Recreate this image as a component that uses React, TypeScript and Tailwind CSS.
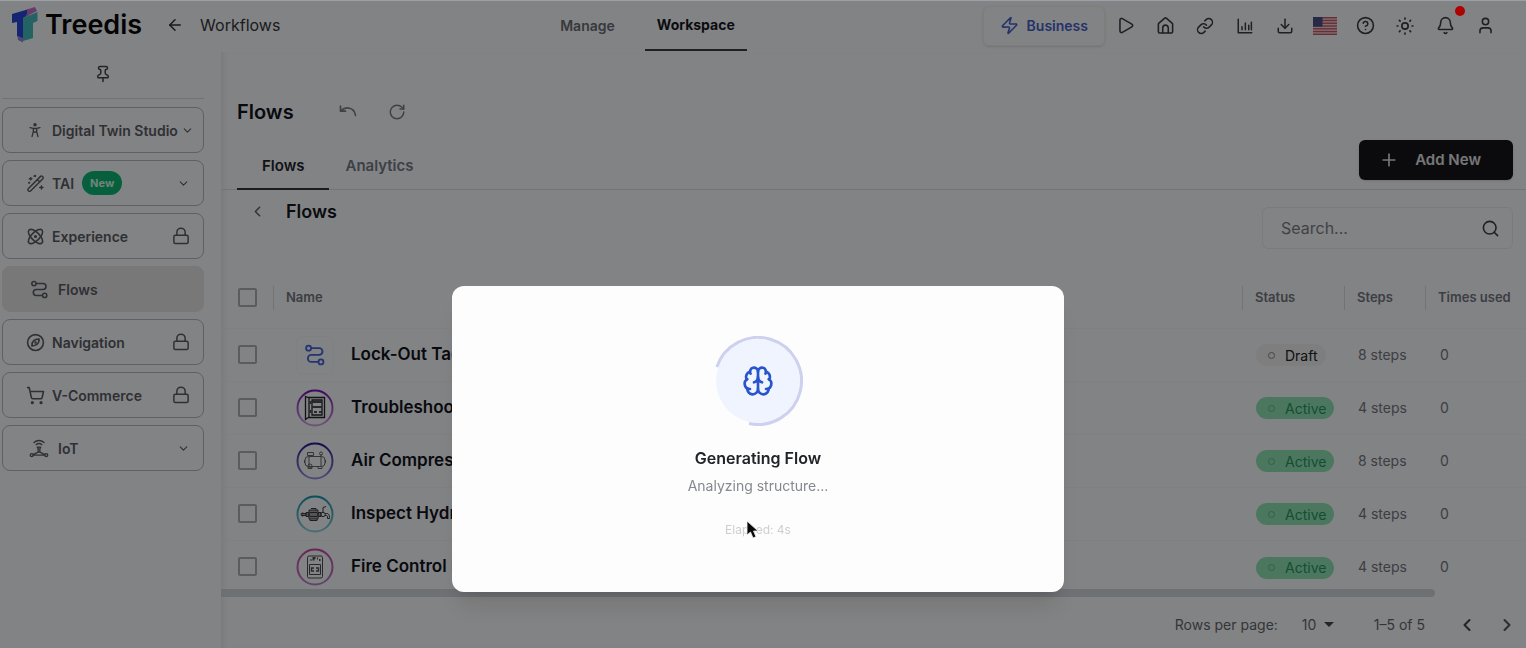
import { useState } from "react";
import type { ReactNode } from "react";
import {
  ArrowLeft,
  Atom,
  Bell,
  Brain,
  ChevronDown,
  ChevronLeft,
  ChevronRight,
  CircleHelp,
  Download,
  Link as LinkIcon,
  Pin,
  Play,
  Plus,
  RotateCw,
  Search,
  ShoppingCart,
  User,
  Zap,
} from "lucide-react";
import clsx from "clsx";

interface GlyphProps {
  size?: number;
  className?: string;
  strokeWidth?: number;
  children?: ReactNode;
}

function Glyph({ size = 20, className, strokeWidth = 2, children }: GlyphProps) {
  return (
    <svg width={size} height={size} viewBox="0 0 24 24" fill="none" stroke="currentColor" strokeWidth={strokeWidth} strokeLinecap="round" strokeLinejoin="round" className={className} aria-hidden="true">
      {children}
    </svg>
  );
}

function FlowIcon({ size = 20, className }: GlyphProps) {
  return (
    <Glyph size={size} className={className}>
      <circle cx="5" cy="4.5" r="2.7" />
      <circle cx="18.5" cy="19.5" r="2.7" />
      <path d="M8 4.500h8.500a3.700 3.700 0 0 1 0 7.400H8a3.800 3.800 0 0 0 0 7.600h7.500" />
    </Glyph>
  );
}

function HomeIcon() {
  return (
    <Glyph size={19}>
      <path d="M3 10.500a2 2 0 0 1 .7-1.500l7-6a2 2 0 0 1 2.600 0l7 6a2 2 0 0 1 .7 1.500V20a1.500 1.500 0 0 1-1.500 1.500h-15A1.500 1.500 0 0 1 3 20z" />
      <path d="M8.500 21v-6a3.500 3.500 0 0 1 7 0v6" />
    </Glyph>
  );
}

function ChartIcon() {
  return (
    <Glyph size={18}>
      <path d="M3 3v18h18" />
      <path d="M8 17v-4M12.500 17V8M17 17v-6M20.500 17V7" />
    </Glyph>
  );
}

function SunIcon() {
  return (
    <Glyph>
      <circle cx="12" cy="12" r="3.800" />
      <path d="M12 2.500v1M12 20.500v1M2.500 12h1M20.500 12h1M5.300 5.300l.8.8M17.900 17.900l.8.8M18.700 5.300l-.8.8M6.100 17.900l-.8.8" />
    </Glyph>
  );
}

function PersonIcon() {
  return (
    <Glyph size={16} strokeWidth={2}>
      <circle cx="12" cy="4" r="1.600" fill="currentColor" />
      <path d="M4.500 8.500l5 1.200v4.800L7.500 22M19.500 8.500l-5 1.200v4.800l2 7.500M9.500 9.700h5M9.800 15h4.400" />
    </Glyph>
  );
}

function WandIcon() {
  return (
    <Glyph size={19} strokeWidth={1.800}>
      <path d="M2.800 18.600 18.400 3a1.600 1.600 0 0 1 2.300 0l.6.600a1.600 1.600 0 0 1 0 2.300L5.700 21.500a1.600 1.600 0 0 1-2.300 0l-.6-.6a1.600 1.600 0 0 1 0-2.300zM14.500 7l3 3" />
      <path fill="currentColor" strokeWidth="1.200" d="M4 6l1.500-.6L6 4l.6 1.400L8 6l-1.400.6L6 8l-.6-1.400zM10 2.500l1-.4.400-1 .400 1 1 .4-1 .400-.4 1-.4-1zM17 17l1.800-.7.700-1.800.7 1.800 1.800.7-1.800.7-.7 1.800-.7-1.800zM3 11l.8-.3.300-.8.300.8.800.3-.8.300-.3.800-.3-.8z" />
    </Glyph>
  );
}

function CompassIcon() {
  return (
    <Glyph size={19}>
      <circle cx="12" cy="12" r="10" />
      <path d="M16.500 7.500c.3 3.500-.8 5.500-2.800 7-1.700 1.300-3.700 1.700-6.200 2-.2-3 .6-5.200 2.300-6.800 1.700-1.500 3.700-2 6.700-2.200z" />
      <circle cx="12" cy="12" r=".7" />
    </Glyph>
  );
}

function PadlockIcon() {
  return (
    <Glyph size={18}>
      <rect x="2.500" y="11" width="19" height="11" rx="2" />
      <path d="M6.500 11V7a5.500 5.500 0 0 1 11 0v4" />
    </Glyph>
  );
}

function IotIcon() {
  return (
    <Glyph size={20} strokeWidth={1.600}>
      <path d="M6 5.500c3.500-3.300 8.500-3.300 12 0M8.500 8c2.200-1.800 4.800-1.800 7 0" />
      <path d="M10 11h4l-1 2v4h-2v-4zM11 17l-6 3M13 17l6 3M5 20.500h14" />
      <circle cx="3.300" cy="20.500" r="1.800" />
      <circle cx="20.700" cy="20.500" r="1.800" />
    </Glyph>
  );
}

function LogoMark() {
  return (
    <svg width="26" height="36" viewBox="0 0 26 36" aria-hidden="true">
      <path d="M0 7 17 2v6l-6 3v21l-6-3V15l-5 1z" fill="#2747d8" />
      <path d="M15 2.500 23 0l2 4-8 4-5 3 3-4z" fill="#c96fcf" />
      <path d="M11 11 25.500 5v9L21 16v15l-10 3z" fill="#46bfc0" />
      <path d="m5.500 29 5.500 2v4.500L6 33z" fill="#a080e4" />
    </svg>
  );
}

function FlagIcon() {
  return (
    <svg width="24" height="18" viewBox="0 0 24 18" aria-hidden="true">
      <rect width="24" height="18" rx="1" fill="#ecd8de" />
      {[0, 1, 2, 3, 4, 5, 6].map((row) => (
        <rect key={row} y={row * 2.77} width="24" height="1.400" fill="#cc5866" />
      ))}
      <rect width="9.500" height="9.700" fill="#4c4f88" />
    </svg>
  );
}

function FlowThumb({ kind }: { kind: string }) {
  const tones: Record<string, [string, string]> = {
    cabinet: ["#7a12b8", "#d4a0e8"],
    compressor: ["#2a1a98", "#9a8ae0"],
    hydraulic: ["#1698b0", "#88d0d8"],
    fire: ["#c848a8", "#bc80cc"],
  };
  if (kind === "flow") {
    return (
      <span className="flex size-[38px] items-center justify-center rounded-md border border-[#f6f6fa] text-[#4664dc]">
        <FlowIcon size={22} />
      </span>
    );
  }
  return (
    <svg width="38" height="38" viewBox="0 0 38 38" fill="none" stroke="#26262a" aria-hidden="true">
      <defs>
        <linearGradient id={`ring-${kind}`} x1="0" y1="0" x2="0" y2="1">
          <stop offset="0" stopColor={tones[kind][0]} />
          <stop offset="1" stopColor={tones[kind][1]} />
        </linearGradient>
      </defs>
      <circle cx="19" cy="19" r="17.500" stroke={`url(#ring-${kind})`} strokeWidth="2" />
      {kind === "cabinet" && (
        <g strokeWidth="1.300">
          <path d="M9.500 7.500 13 9v19l-3.500 2.500zM13 8.500h15.500v20H13zM16 11h10v15H16z" />
          <path stroke="#505054" strokeWidth="2" d="M16 13h10M16 18h10M18 23h3M23 23h3M14.500 12v3M14.500 21v3" />
        </g>
      )}
      {kind === "compressor" && (
        <g stroke="#66666b">
          <rect x="9" y="14.500" width="20" height="10" rx="3.500" />
          <path d="M13 15v9M25 15v9M11.500 10.500h6v3h-6zM14 13.500V15M25 15v-3M8.500 18v3M29.500 18v3M12 25v1.500h4V25M22 25v1.500h4V25" />
          <circle cx="25" cy="11.500" r="1.500" />
          <circle cx="14" cy="24" r="2" />
        </g>
      )}
      {kind === "hydraulic" && (
        <g stroke="#3a3a3e">
          <path fill="#a4a4a6" d="M13 15h9v9h-9zM10 17.500h3v4h-3zM22 17.500h3v4h-3z" />
          <path d="M6 18.500h4v2H6zM15 13.500h5V15M14 24v1.500h7V24M14 17.500h7M14 21.500h7M27 17.500v-5l3-1M29 18.500h1.500c2 0 3 1.500 3 4v1h-2v-1.500c0-1-.5-1.500-1.500-1.500h-1" />
          <circle cx="6.500" cy="19.500" r="1.500" />
          <circle cx="27" cy="19.500" r="2.200" />
        </g>
      )}
      {kind === "fire" && (
        <g stroke="#505054">
          <rect x="11.500" y="8" width="15" height="22" rx="1.500" />
          <path d="M13.500 16.500h11v10h-11z" />
          <path strokeWidth="2" d="M14.500 12h1M17.500 12.500v-2.500h2M21 10.500h1M23 12h1.500" />
          <path strokeWidth="1.400" d="M18 20h-2.500v3H18M20 20h2.500v3H20" />
        </g>
      )}
    </svg>
  );
}

function HeaderButton({ label, children }: { label: string; children: ReactNode }) {
  return (
    <button type="button" aria-label={label} className="relative flex h-10 w-10 items-center justify-center text-[#3c3e44]">
      {children}
    </button>
  );
}

function Header() {
  return (
    <header className="flex h-[52px] shrink-0 items-start justify-between pr-[21px]">
      <div className="flex h-[50px] items-center pr-8">
        <a href="#home" className="flex items-center gap-[7px] pl-3 text-[27px] leading-8 font-semibold text-[#08080a]">
          <LogoMark />
          Treedis
        </a>
        <button type="button" aria-label="Back" className="ml-6 text-[#303238]">
          <ArrowLeft size={18} strokeWidth={2} />
        </button>
        <span className="ml-4 text-[16px] text-[#34363c]">Workflows</span>
      </div>

      <nav className="flex h-[51px] gap-[18px] text-[14px]">
        <a href="#manage" className="flex items-center px-3 font-semibold text-[#6a6e78]">Manage</a>
        <a href="#workspace" className="flex items-center border-b-2 border-[#3c3e44] px-3 font-bold text-[#16181f]">Workspace</a>
      </nav>

      <div className="flex h-[51px] items-center">
        <button type="button" className="flex h-10 items-center gap-2 rounded-md border border-[#f0f0f2] px-4 text-[14px] font-semibold text-[#4860cc] shadow-sm">
          <Zap size={19} />
          Business
        </button>
        <HeaderButton label="Play"><Play size={19} /></HeaderButton>
        <HeaderButton label="Home"><HomeIcon /></HeaderButton>
        <HeaderButton label="Copy link"><LinkIcon size={18} /></HeaderButton>
        <HeaderButton label="Reports"><ChartIcon /></HeaderButton>
        <HeaderButton label="Download"><Download size={18} /></HeaderButton>
        <HeaderButton label="Language"><FlagIcon /></HeaderButton>
        <HeaderButton label="Help"><CircleHelp size={19} /></HeaderButton>
        <HeaderButton label="Theme"><SunIcon /></HeaderButton>
        <HeaderButton label="Notifications">
          <Bell size={19} />
          <span className="absolute top-0 right-0 z-50 size-[10px] rounded-full bg-[#ac0202]" />
        </HeaderButton>
        <HeaderButton label="Account"><User size={19} /></HeaderButton>
      </div>
    </header>
  );
}

interface SideItem {
  label: string;
  icon: ReactNode;
  trailing?: "chevron" | "lock";
  isNew?: boolean;
  active?: boolean;
  indent?: boolean;
}

const sideItems: SideItem[] = [
  { label: "Digital Twin Studio", icon: <PersonIcon />, trailing: "chevron" },
  { label: "TAI", icon: <WandIcon />, trailing: "chevron", isNew: true },
  { label: "Experience", icon: <Atom size={19} />, trailing: "lock" },
  { label: "Flows", icon: <FlowIcon size={19} />, active: true, indent: true },
  { label: "Navigation", icon: <CompassIcon />, trailing: "lock" },
  { label: "V-Commerce", icon: <ShoppingCart size={19} />, trailing: "lock" },
  { label: "IoT", icon: <IotIcon />, trailing: "chevron", indent: true },
];

function Sidebar() {
  return (
    <aside className="w-[221px] shrink-0 pr-[17px] pl-[2px]">
      <div className="flex h-[47px] items-center justify-center border-b border-[#dadbe0] pb-[3px] text-[#44464c]">
        <button type="button" aria-label="Pin sidebar"><Pin size={18} /></button>
      </div>
      <div className="mt-2 flex flex-col gap-[7px]">
        {sideItems.map((item) => (
          <button
            key={item.label}
            type="button"
            className={clsx(
              "flex h-[46px] items-center rounded-lg border text-[14px] font-semibold whitespace-nowrap text-[#5a5d66]",
              item.active ? "border-[#e6e6e6] bg-[#e6e6e6]" : "border-[#b6b8bd]",
              item.indent ? "pl-[26px]" : "pl-[22px]",
              item.label === "Digital Twin Studio" ? "pr-[9px]" : "pr-[13px]",
            )}
          >
            <span className="flex w-5 shrink-0 justify-center">{item.icon}</span>
            <span className={item.indent ? "ml-[9px]" : "ml-[7px]"}>{item.label}</span>
            {item.isNew && <span className="ml-2 flex h-6 items-center rounded-full bg-[#0cb878] px-2 text-[11px] font-bold text-[#d8fbe8]">New</span>}
            {item.trailing === "chevron" && <ChevronDown size={13} className="ml-auto shrink-0" />}
            {item.trailing === "lock" && <span className="ml-auto"><PadlockIcon /></span>}
          </button>
        ))}
      </div>
    </aside>
  );
}

const flows = [
  { name: "Lock-Out Tagout", kind: "flow", status: "Draft", steps: 8, used: 0 },
  { name: "Troubleshooting", kind: "cabinet", status: "Active", steps: 4, used: 0 },
  { name: "Air Compressor", kind: "compressor", status: "Active", steps: 8, used: 0 },
  { name: "Inspect Hydraulics", kind: "hydraulic", status: "Active", steps: 4, used: 0 },
  { name: "Fire Control Panel", kind: "fire", status: "Active", steps: 4, used: 0 },
];

function StatusBadge({ value }: { value: string }) {
  const active = value === "Active";
  return (
    <span
      className={clsx(
        "inline-flex h-[22px] items-center gap-2.5 rounded-full pr-2 pl-3 text-[14px]",
        active ? "bg-[#93e4b6] text-[#259662]" : "bg-[#f2f2f3] text-[#202228]",
      )}
    >
      <span className={clsx("size-[7px] rounded-full border", active ? "border-[#5cb888]" : "border-[#85878c]")} />
      {value}
    </span>
  );
}

const checkboxClass = "block size-[19px] appearance-none rounded-xs border-2 border-[#b0b1b5]";
const headCellClass = "flex h-6 items-center border-l border-[#dcdce0] pl-3";

function FlowsTable() {
  return (
    <table className="w-full table-fixed border-collapse text-left text-[14px] text-[#737783]">
      <thead>
        <tr className="h-[60px] text-[13px]">
          <th className="w-[52px] pl-[17px]"><input type="checkbox" aria-label="Select all" className={checkboxClass} /></th>
          <th className="font-semibold"><div className={headCellClass}>Name</div></th>
          <th className="w-[102px] font-semibold"><div className={headCellClass}>Status</div></th>
          <th className="w-[81px] font-semibold"><div className={headCellClass}>Steps</div></th>
          <th className="w-[101px] font-semibold"><div className={headCellClass}>Times used</div></th>
        </tr>
      </thead>
      <tbody>
        {flows.map((flow) => (
          <tr key={flow.name} className="h-[53px] border-t border-[#f6f6f8]">
            <td className="pl-[17px]"><input type="checkbox" aria-label={flow.name} className={checkboxClass} /></td>
            <td>
              <div className="flex items-center gap-[17px] pl-[23px] text-[17px] font-semibold text-[#12141d]">
                <FlowThumb kind={flow.kind} />
                {flow.name}
              </div>
            </td>
            <td className="pl-[14px]"><StatusBadge value={flow.status} /></td>
            <td className="pl-[14px]">{flow.steps} steps</td>
            <td className="pl-[15px]">{flow.used}</td>
          </tr>
        ))}
      </tbody>
    </table>
  );
}

function Pagination() {
  const [rows, setRows] = useState("10");
  return (
    <div className="flex flex-1 items-center justify-end pt-1 pr-[9px] text-[14px] text-[#65676d]">
      <label htmlFor="rows">Rows per page:</label>
      <span className="relative ml-6 flex items-center">
        <select id="rows" value={rows} onChange={(event) => setRows(event.target.value)} className="w-8 appearance-none bg-transparent">
          <option>10</option>
          <option>25</option>
        </select>
        <span className="pointer-events-none absolute right-0 border-x-[5px] border-t-[5px] border-x-transparent border-t-[#484a50]" />
      </span>
      <span className="ml-10">1–5 of 5</span>
      <button type="button" aria-label="Previous page" className="ml-8 text-[#46484e]"><ChevronLeft size={20} strokeWidth={2.5} /></button>
      <button type="button" aria-label="Next page" className="ml-5 text-[#56585e]"><ChevronRight size={20} strokeWidth={2.5} /></button>
    </div>
  );
}

function Workspace() {
  return (
    <main className="flex min-w-0 flex-1 flex-col pt-11 shadow-[inset_6px_0_6px_-4px_#e4e6ea]">
      <div className="flex h-8 items-center pl-4 text-[#7b7e87]">
        <h1 className="text-[20px] font-semibold text-[#12141d]">Flows</h1>
        <button type="button" aria-label="Undo" className="ml-11">
          <Glyph size={20}>
            <path d="M3 5v6h6M3.500 10.500C9 5 19.500 6 21 16" />
          </Glyph>
        </button>
        <button type="button" aria-label="Refresh" className="ml-[30px]"><RotateCw size={18} /></button>
      </div>

      <div className="mt-3 flex h-[50px] shrink-0 items-start justify-between border-b border-[#dfe0e5] pr-[13px] pl-4">
        <div className="flex h-[50px] text-[15px] font-semibold">
          <button type="button" className="border-b-2 border-[#34363c] px-[25px] pt-1 text-[#22242c]">Flows</button>
          <button type="button" className="px-4 pt-0.5 text-[#747b8a]">Analytics</button>
        </div>
        <button type="button" className="flex h-10 items-center gap-4 rounded-md bg-[#16161a] pr-8 pl-5 text-[15px] font-semibold text-[#e4e4e8] shadow-sm">
          <Plus size={20} />
          Add New
        </button>
      </div>

      <div className="flex shrink-0 items-start justify-between pr-[13px] pb-[19px]">
        <div className="flex h-[42px] items-center pl-[28px]">
          <button type="button" aria-label="Back to flows" className="text-[#5a5d66]"><ChevronLeft size={17} /></button>
          <h2 className="ml-5 text-[18px] font-semibold text-[#16181f]">Flows</h2>
        </div>
        <div className="mt-[17px] flex h-[42px] w-[251px] items-center rounded-md border border-[#eaebee] pr-3 pl-[18px]">
          <input aria-label="Search" placeholder="Search..." className="min-w-0 flex-1 bg-transparent text-[16px] outline-none placeholder:text-[#7c7f88]" />
          <Search size={19} className="text-[#3c3e44]" />
        </div>
      </div>

      <FlowsTable />
      <div className="-mt-1 h-2 shrink-0">
        <div className="h-full w-[93%] rounded-r-full bg-[#d4d9df]" />
      </div>
      <Pagination />
    </main>
  );
}

function GeneratingDialog() {
  return (
    <div className="fixed inset-0 z-40 flex items-end justify-center border-t border-[#9d9ea6] bg-black/48 pr-[10px] pb-14">
      <div role="dialog" aria-modal="true" aria-labelledby="dialog-title" className="relative flex h-[306px] w-[612px] flex-col items-center rounded-xl bg-[#fdfdfd] pt-[50px] shadow-xl">
        <div className="relative flex size-[90px] items-center justify-center text-[#2854cc]">
          <svg width="90" height="90" viewBox="0 0 90 90" fill="none" className="absolute inset-0" aria-hidden="true">
            <circle cx="45" cy="45" r="42" fill="#eff4fe" />
            <path d="M3.800 31A43.500 43.500 0 1 1 36 87.500" stroke="#cdd0ee" strokeWidth="3" />
          </svg>
          <Brain size={32} className="relative" />
        </div>
        <h2 id="dialog-title" className="mt-5 text-[16px] leading-6 font-semibold text-[#202328]">Generating Flow</h2>
        <p className="mt-1 text-[14px] leading-6 text-[#85888e]">Analyzing structure...</p>
        <p className="mt-[22px] text-[12px] leading-5 text-[#cfcfd1]">Elapsed: 4s</p>
        <svg width="14" height="20" viewBox="0 0 14 20" className="absolute top-[234px] left-[294px]" aria-hidden="true">
          <path d="M1 1v14l3.500-3 2.500 6 3-1.300-2.500-5.700H12z" fill="#0a0a0a" stroke="#f4f4f4" strokeWidth=".8" />
        </svg>
      </div>
    </div>
  );
}

export default function App() {
  return (
    <div className="flex h-screen flex-col overflow-hidden bg-[#fafbfd] font-['Inter',sans-serif]">
      <Header />
      <div className="flex min-h-0 flex-1">
        <Sidebar />
        <Workspace />
      </div>
      <GeneratingDialog />
    </div>
  );
}
